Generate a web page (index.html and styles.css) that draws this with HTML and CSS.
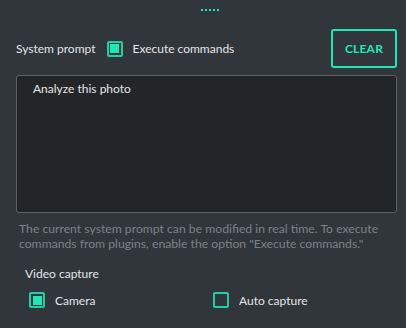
FILE: index.html
```html
<!DOCTYPE html>
<html>
<head>
<meta charset="utf-8">
<link rel="stylesheet" href="styles.css">
</head>
<body>
<div class="panel">
  <div class="handle"><span></span><span></span><span></span><span></span><span></span></div>
  <div class="header">
    <span class="label">System prompt</span>
    <label class="check"><span class="box on"></span><span>Execute commands</span></label>
    <button class="clear">CLEAR</button>
  </div>
  <div class="prompt">Analyze this photo</div>
  <p class="help">The current system prompt can be modified in real time. To execute commands from plugins, enable the option "Execute commands."</p>
  <div class="section">Video capture</div>
  <div class="options">
    <label class="check"><span class="box on"></span><span>Camera</span></label>
    <label class="check"><span class="box"></span><span>Auto capture</span></label>
  </div>
</div>
</body>
</html>
```
FILE: styles.css
```css
* { box-sizing: border-box; }
html, body { margin: 0; padding: 0; }
body {
  background: #31363b;
  font-family: Lato, "Noto Sans", sans-serif;
  font-size: 12px;
  color: #e3e5e7;
  width: 406px;
  height: 328px;
  overflow: hidden;
}
.panel { padding: 0 9px 0 16px; }
.handle {
  display: flex;
  justify-content: center;
  gap: 2px;
  padding-top: 9px;
  height: 29px;
  padding-left: 7px;
}
.handle span {
  width: 2px;
  height: 2px;
  background: #1de9b6;
}
.header {
  display: flex;
  align-items: center;
  height: 39px;
}
.label { margin-right: 11px; }
.check {
  display: flex;
  align-items: center;
  gap: 10px;
}
.box {
  width: 16px;
  height: 16px;
  border: 2px solid #1fcfa6;
  border-radius: 2px;
  padding: 1.5px;
  display: inline-block;
}
.box.on::after {
  content: "";
  display: block;
  width: 100%;
  height: 100%;
  background: #1de9b6;
}
.clear {
  margin-left: auto;
  width: 66px;
  height: 39px;
  background: transparent;
  border: 2px solid #1de9b6;
  border-radius: 3px;
  color: #1de9b6;
  font-family: Lato, sans-serif;
  font-weight: bold;
  font-size: 12px;
  letter-spacing: 0.2px;
  padding: 0;
}
.prompt {
  margin-top: 7px;
  height: 138px;
  background: #232629;
  border: 1px solid #5b5f63;
  border-radius: 3px;
  padding: 5px 16px;
  color: #e3e5e7;
}
.help {
  margin: 8px 0 0 3px;
  font-size: 12.2px;
  line-height: 15px;
  color: #7d8186;
}
.section {
  margin: 15px 0 0 9px;
}
.options {
  display: grid;
  grid-template-columns: 184px 1fr;
  margin: 11px 0 0 13px;
}
```
